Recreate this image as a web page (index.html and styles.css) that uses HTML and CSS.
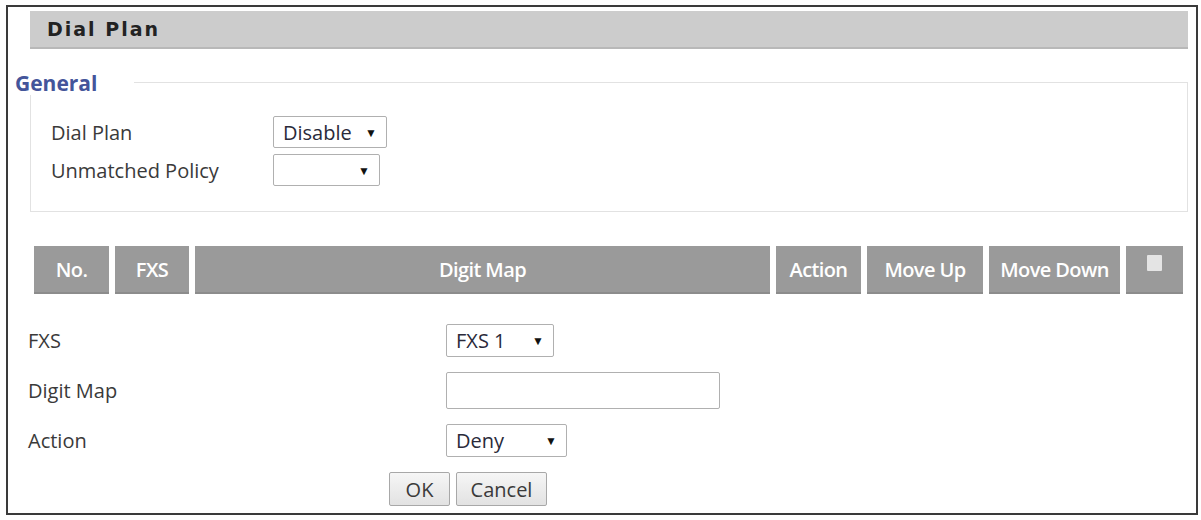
FILE: index.html
```html
<!DOCTYPE html>
<html>
<head>
<meta charset="utf-8">
<link rel="stylesheet" href="styles.css">
</head>
<body>
<div class="frame">
  <div class="title-bar">Dial Plan</div>
  <div class="general-head">
    <span class="legend">General</span>
    <span class="legend-line"></span>
  </div>
  <div class="general">
    <div class="grow">
      <span class="glabel">Dial Plan</span>
      <div class="sel sel-disable"><span>Disable</span><span class="arr">▼</span></div>
    </div>
    <div class="grow">
      <span class="glabel">Unmatched Policy</span>
      <div class="sel sel-empty"><span></span><span class="arr">▼</span></div>
    </div>
  </div>
  <div class="thead">
    <div class="th">No.</div>
    <div class="th">FXS</div>
    <div class="th">Digit Map</div>
    <div class="th">Action</div>
    <div class="th">Move Up</div>
    <div class="th">Move Down</div>
    <div class="th"><span class="chk"></span></div>
  </div>
  <div class="form">
    <span class="flabel">FXS</span>
    <div class="sel sel-fxs"><span>FXS 1</span><span class="arr">▼</span></div>
    <span class="flabel">Digit Map</span>
    <div class="txt"></div>
    <span class="flabel">Action</span>
    <div class="sel sel-deny"><span>Deny</span><span class="arr">▼</span></div>
  </div>
  <div class="buttons">
    <button class="btn btn-ok">OK</button>
    <button class="btn btn-cancel">Cancel</button>
  </div>
</div>
</body>
</html>
```
FILE: styles.css
```css
* { box-sizing: border-box; }
html, body { margin: 0; padding: 0; background: #fff; }
body {
  font-family: "Open Sans", "Liberation Sans", sans-serif;
  font-size: 20px;
  color: #3a3a3a;
}
.frame {
  margin: 5px 3px 5px 6px;
  height: 510px;
  border: 2px solid #3a3a3a;
  padding: 4px 8px 0 22px;
}
.title-bar {
  height: 38px;
  background: #cccccc;
  border-bottom: 2px solid #b8b8b8;
  font-family: "DejaVu Sans", sans-serif;
  font-weight: bold;
  font-size: 19px;
  letter-spacing: 2px;
  color: #222;
  padding-left: 17px;
  display: flex;
  align-items: center;
}
.general-head {
  margin: 22px 0 0 -15px;
  height: 24px;
  display: flex;
}
.legend {
  font-weight: bold;
  font-size: 21px;
  line-height: 24px;
  color: #44559a;
  letter-spacing: 0;
  padding-right: 37px;
}
.legend-line {
  flex: 1;
  margin-top: 11px;
  border-top: 1px solid #e2e2e2;
  border-right: 1px solid #e2e2e2;
}
.general {
  height: 117px;
  border: 1px solid #e2e2e2;
  border-top: none;
  padding: 21px 0 0 20px;
}
.grow {
  display: flex;
  align-items: center;
  height: 32px;
  margin-bottom: 6px;
}
.glabel { width: 222px; }
.sel {
  height: 32px;
  border: 1px solid #b0b0b0;
  border-radius: 2px;
  display: flex;
  align-items: center;
  justify-content: space-between;
  padding: 0 9px 0 9px;
  background: #fff;
  color: #2a2a3a;
}
.arr { font-size: 12px; color: #111; }
.sel-disable { width: 114px; }
.sel-empty { width: 107px; }
.thead {
  margin-top: 34px;
  margin-left: 4px;
  display: grid;
  grid-template-columns: 75px 74px 575px 85px 116px 131px 57px;
  column-gap: 6px;
}
.th {
  height: 48px;
  background: #9a9a9a;
  border-bottom: 2px solid #8c8c8c;
  color: #fff;
  font-weight: 600;
  font-size: 20px;
  letter-spacing: -0.6px;
  display: flex;
  align-items: center;
  justify-content: center;
}
.chk {
  width: 15px;
  height: 16px;
  background: #e4e4e4;
  border-radius: 1px;
  margin-bottom: 12px;
}
.form {
  margin-top: 30px;
  margin-left: -2px;
  display: grid;
  grid-template-columns: 418px auto;
  justify-items: start;
  align-items: center;
  row-gap: 15px;
}
.flabel { color: #3a3a3a; }
.sel-fxs { width: 108px; height: 33px; }
.sel-deny { width: 121px; height: 33px; }
.txt {
  width: 274px;
  height: 37px;
  border: 1px solid #b0b0b0;
  border-radius: 2px;
}
.buttons {
  margin-top: 15px;
  padding-left: 359px;
  display: flex;
  gap: 6px;
}
.btn {
  height: 34px;
  border: 1px solid #a8a8a8;
  border-radius: 2px;
  background: linear-gradient(#f6f6f6, #e2e2e2);
  font-family: "Open Sans", sans-serif;
  font-size: 20px;
  color: #3a3a3a;
  padding: 0;
}
.btn-ok { width: 61px; }
.btn-cancel { width: 91px; }
```
